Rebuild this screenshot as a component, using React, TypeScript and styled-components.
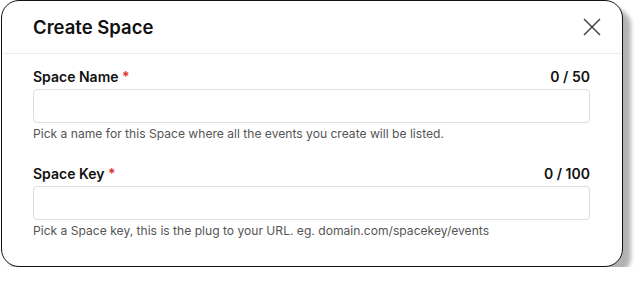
import React from 'react'
import styled, { createGlobalStyle } from 'styled-components'

const GlobalStyle = createGlobalStyle`
  html, body {
    margin: 0;
    padding: 0;
    background: #ffffff;
  }
  body {
    font-family: Inter, 'Noto Sans', sans-serif;
    color: #111;
  }
`

interface FieldProps {
  label: string
  max: number
  hint: string
}

const Field = ({ label, max, hint }: FieldProps) => {
  return (
    <FieldBlock>
      <LabelRow>
        <Label>
          {label} <Required>*</Required>
        </Label>
        <Counter>0 / {max}</Counter>
      </LabelRow>
      <Input type="text" />
      <Hint>{hint}</Hint>
    </FieldBlock>
  )
}

const App = () => {
  return (
    <>
      <GlobalStyle />
      <Card>
        <Header>
          <Title>Create Space</Title>
          <CloseButton aria-label="Close">
            <svg width="18" height="18" viewBox="0 0 18 18">
              <path
                d="M1 1 L17 17 M17 1 L1 17"
                stroke="#3a3a3a"
                strokeWidth="1.4"
                fill="none"
              />
            </svg>
          </CloseButton>
        </Header>
        <Body>
          <Field
            label="Space Name"
            max={50}
            hint="Pick a name for this Space where all the events you create will be listed."
          />
          <Field
            label="Space Key"
            max={100}
            hint="Pick a Space key, this is the plug to your URL. eg. domain.com/spacekey/events"
          />
        </Body>
      </Card>
    </>
  )
}

const Card = styled.section`
  box-sizing: border-box;
  margin: 0 0 0 1px;
  width: 622px;
  height: 267px;
  background: #fff;
  border: 1.5px solid #111;
  border-radius: 18px;
  box-shadow: 8px 8px 4px rgba(0, 0, 0, 0.3);
  overflow: hidden;
`

const Header = styled.header`
  display: flex;
  align-items: center;
  justify-content: space-between;
  height: 52px;
  padding: 0 21px 0 31px;
  border-bottom: 1px solid #ececec;
`

const Title = styled.h2`
  margin: 0;
  font-size: 18.5px;
  font-weight: 600;
  color: #111;
`

const CloseButton = styled.button`
  display: flex;
  padding: 0;
  border: 0;
  background: none;
  cursor: pointer;
`

const Body = styled.div`
  display: flex;
  flex-direction: column;
  gap: 22px;
  padding: 14px 32px 0 31px;
`

const FieldBlock = styled.div`
  display: flex;
  flex-direction: column;
`

const LabelRow = styled.div`
  display: flex;
  justify-content: space-between;
  align-items: baseline;
  margin-bottom: 3px;
`

const Label = styled.label`
  font-size: 14px;
  font-weight: 600;
  line-height: 18px;
  color: #111;
`

const Required = styled.span`
  color: #e0322f;
`

const Counter = styled.span`
  font-size: 14px;
  font-weight: 600;
  line-height: 18px;
  color: #111;
`

const Input = styled.input`
  box-sizing: border-box;
  height: 34px;
  width: 100%;
  border: 1px solid #dcdce2;
  border-radius: 4px;
  background: #fff;
  outline: none;
`

const Hint = styled.p`
  margin: 2px 0 0;
  font-size: 12.1px;
  line-height: 18px;
  color: #555;
`

export default App
